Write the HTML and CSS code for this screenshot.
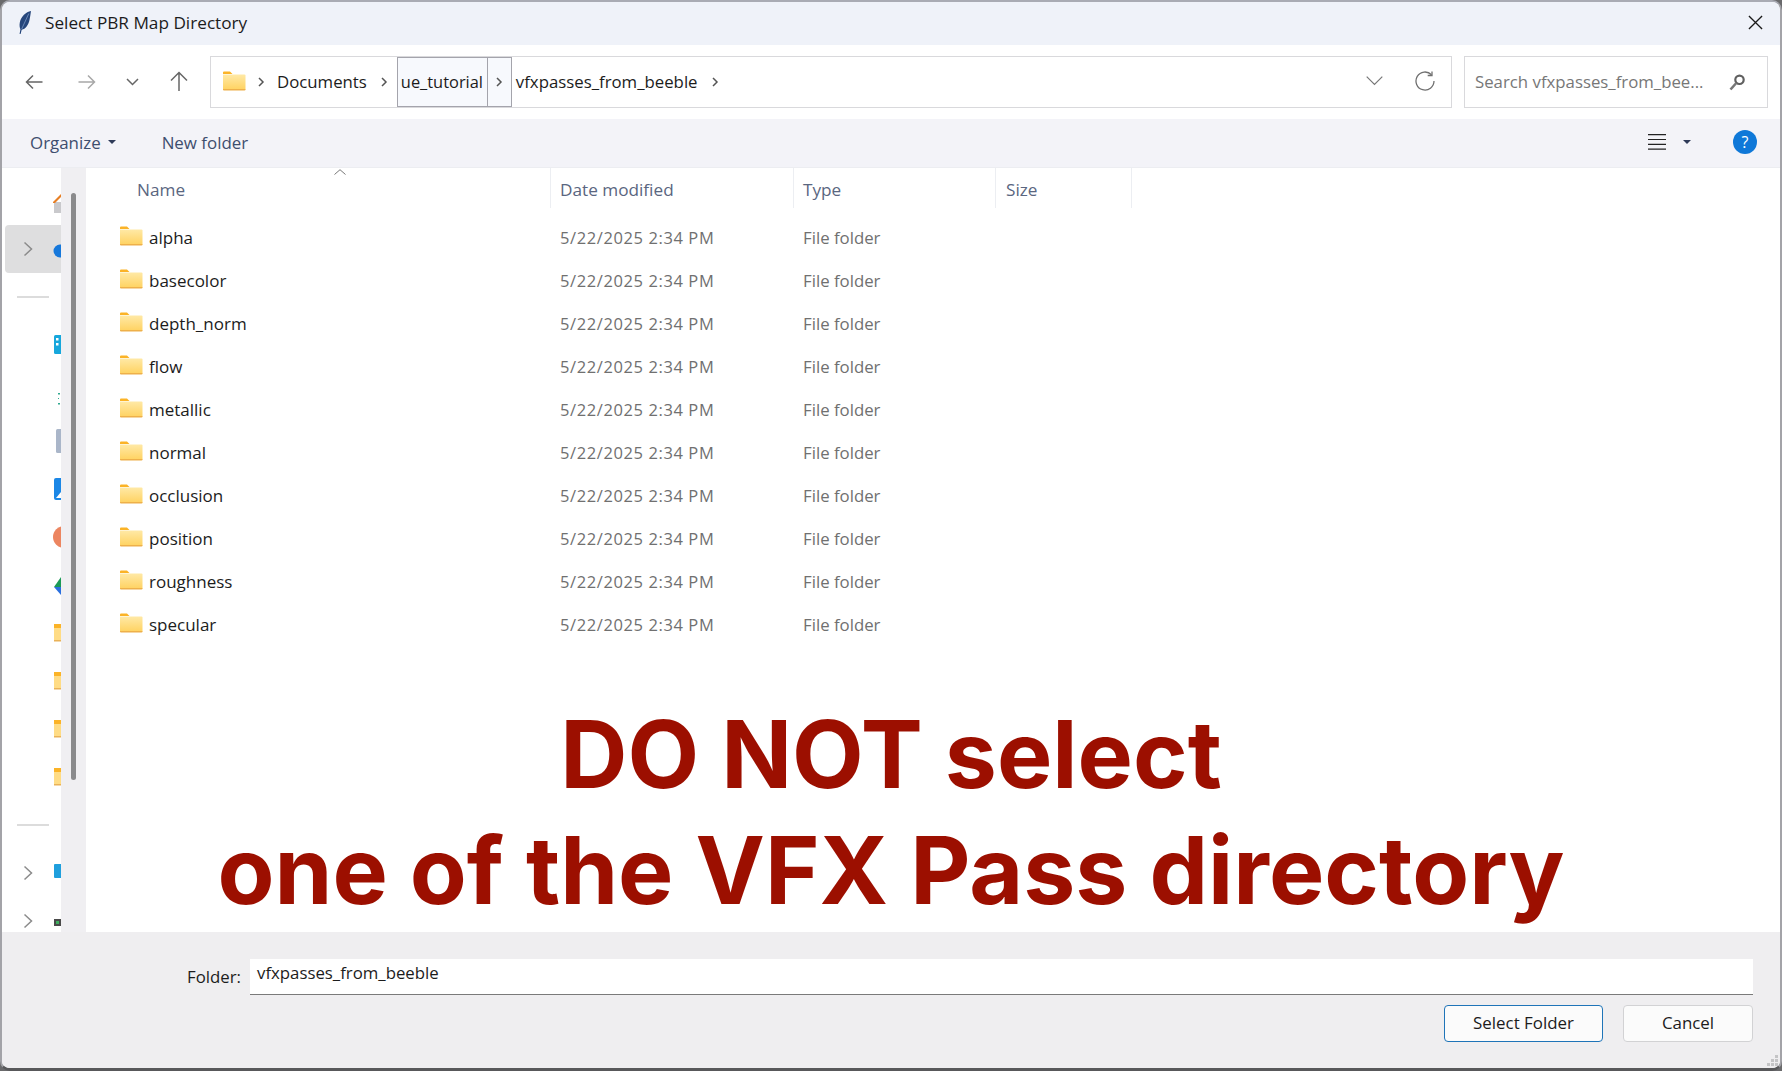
FILE: index.html
```html
<!DOCTYPE html>
<html lang="en">
<head>
<meta charset="utf-8">
<title>Select PBR Map Directory</title>
<link rel="stylesheet" href="styles.css">
</head>
<body>
<svg class="defs" width="0" height="0" aria-hidden="true">
  <defs>
    <linearGradient id="fg" x1="0" y1="0" x2="0" y2="1">
      <stop offset="0" stop-color="#ffe9a6"/><stop offset="1" stop-color="#ffd260"/>
    </linearGradient>
    <symbol id="folder" viewBox="0 0 24 20">
      <path d="M1 1.500a1 1 0 0 1 1-1h6l2.500 2.500H1z" fill="#fbb327"/>
      <path d="M1 3.500h21.500a1 1 0 0 1 1 1v13.500a1 1 0 0 1-1 1H2a1 1 0 0 1-1-1z" fill="url(#fg)"/>
      <path d="M1 18h22.500v.5a1 1 0 0 1-1 1H2a1 1 0 0 1-1-1z" fill="#eeb04a"/>
    </symbol>
    <symbol id="chev" viewBox="0 0 10 16">
      <path d="M1.500 1.500 8.500 8l-7 6.500" fill="none" stroke="#8b8b8b" stroke-width="1.500"/>
    </symbol>
    <symbol id="crumb" viewBox="0 0 8 12">
      <path d="M2 2l4 4-4 4" fill="none" stroke="#555" stroke-width="1.500"/>
    </symbol>
    <symbol id="sidefolder" viewBox="0 0 22 24">
      <rect x="1" y="3" width="21" height="5" fill="#fbb327"/>
      <rect x="1" y="7" width="21" height="12" fill="#ffdc85"/>
      <rect x="1" y="19" width="21" height="1.500" fill="#e9b258"/>
    </symbol>
  </defs>
</svg>

<div class="window">
  <header class="titlebar">
    <svg class="feather" viewBox="0 0 12 23"><path d="M12 0C7 .8 2 5.500.8 11.500c-.5 2.800-.2 5 .6 6.700L.6 23h1l1.100-4.200C6.500 18 9.500 14 10.500 9 11 6 11.700 3 12 0z" fill="#27477c"/><path d="M9.800 2.500 2.700 18" stroke="#86a3cf" stroke-width=".7" fill="none"/></svg>
    <span class="title">Select PBR Map Directory</span>
    <svg class="close" viewBox="0 0 16 16"><path d="M1 1l14 14M15 1 1 15" stroke="#1a1a1a" stroke-width="1.400" fill="none"/></svg>
  </header>

  <nav class="navbar">
    <svg class="nav-btn back" viewBox="0 0 18 16"><path d="M17.500 8H1.500M8 1.500 1.500 8 8 14.500" fill="none" stroke="#666" stroke-width="1.500"/></svg>
    <svg class="nav-btn forward" viewBox="0 0 18 16"><path d="M.5 8h16M10 1.500 16.500 8 10 14.500" fill="none" stroke="#a8a8a8" stroke-width="1.500"/></svg>
    <svg class="nav-btn recent" viewBox="0 0 13 8"><path d="M1 1l5.500 5.500L12 1" fill="none" stroke="#666" stroke-width="1.500"/></svg>
    <svg class="nav-btn up" viewBox="0 0 18 20"><path d="M9 20V1.500M1 9.500 9 1.500l8 8" fill="none" stroke="#666" stroke-width="1.500"/></svg>
    <div class="address">
      <svg class="addr-folder"><use href="#folder"/></svg>
      <svg class="crumb first"><use href="#crumb"/></svg>
      <span class="seg docs">Documents</span>
      <svg class="crumb"><use href="#crumb"/></svg>
      <div class="seg-hover"><span class="seg-name">ue_tutorial</span><span class="seg-arrow"><svg class="crumb"><use href="#crumb"/></svg></span></div>
      <span class="seg vfx">vfxpasses_from_beeble</span>
      <svg class="crumb last"><use href="#crumb"/></svg>
      <svg class="addr-drop" viewBox="0 0 17 10"><path d="M.7.7l7.800 7.800L16.300.7" fill="none" stroke="#777" stroke-width="1.200"/></svg>
      <svg class="refresh" viewBox="0 0 20 20"><path d="M16.500 3.800A9 9 0 1 0 19 10" fill="none" stroke="#707070" stroke-width="1.300"/><path d="M17 .5v4h-4.300" fill="none" stroke="#707070" stroke-width="1.300"/></svg>
    </div>
    <div class="search">
      <span class="search-text">Search vfxpasses_from_bee...</span>
      <svg class="mag" viewBox="0 0 16 17"><circle cx="10.500" cy="5.800" r="4.200" fill="none" stroke="#606060" stroke-width="2.200"/><path d="M7.300 9 1.500 15.500" stroke="#777" stroke-width="2.600" fill="none"/></svg>
    </div>
  </nav>

  <div class="toolbar">
    <span class="tool organize">Organize</span>
    <span class="caret"></span>
    <span class="tool newfolder">New folder</span>
    <span class="spacer"></span>
    <svg class="listicon" viewBox="0 0 18 16"><path d="M0 .7h18M0 5.500h18M0 10.300h18M0 15.200h18" stroke="#222" stroke-width="1.200" fill="none"/></svg>
    <span class="caret view"></span>
    <span class="help">?</span>
  </div>

  <div class="content">
    <aside class="sidebar">
      <div class="side-row">
        <span class="slot"></span>
        <svg class="side-icon" viewBox="0 0 22 24"><path d="M1 13h21v11H1z" fill="#c9c9cc"/><path d="M0 13 8 5v3l-6 6H0z" fill="#e77f24"/></svg>
      </div>
      <div class="side-row selected">
        <span class="slot"><svg class="side-chev"><use href="#chev"/></svg></span>
        <svg class="side-icon" viewBox="0 0 22 24"><circle cx="7" cy="14" r="6.500" fill="#1678db"/></svg>
      </div>
      <div class="side-sep"></div>
      <div class="side-row">
        <span class="slot"></span>
        <svg class="side-icon" viewBox="0 0 22 24"><rect x="1" y="2" width="21" height="19" rx="1.500" fill="#17a7dc"/><rect x="3" y="5" width="2.500" height="2.500" fill="#fff"/><rect x="3" y="10" width="2.500" height="2.500" fill="#fff"/></svg>
      </div>
      <div class="side-row">
        <span class="slot"></span>
        <svg class="side-icon" viewBox="0 0 22 24"><rect x="5" y="12" width="2" height="1.500" fill="#31a98f"/><rect x="5" y="17" width="1" height="1" fill="#31a98f"/><rect x="5" y="22" width="2" height="1.500" fill="#31a98f"/></svg>
      </div>
      <div class="side-row">
        <span class="slot"></span>
        <svg class="side-icon" viewBox="0 0 22 24"><rect x="3" y="0" width="19" height="24" rx="1.500" fill="#aab6c9"/></svg>
      </div>
      <div class="side-row">
        <span class="slot"></span>
        <svg class="side-icon" viewBox="0 0 22 24"><rect x="1" y="1" width="21" height="22" rx="2" fill="#1b87e6"/><path d="M3 21l5-6v6z" fill="#fff"/></svg>
      </div>
      <div class="side-row">
        <span class="slot"></span>
        <svg class="side-icon" viewBox="0 0 22 24"><circle cx="11" cy="12" r="11" fill="#ec8560"/></svg>
      </div>
      <div class="side-row">
        <span class="slot"></span>
        <svg class="side-icon" viewBox="0 0 22 24"><path d="M1 14 8 4v10z" fill="#1b9a56"/><path d="M1 14h7v8z" fill="#2a6fdf"/></svg>
      </div>
      <div class="side-row"><span class="slot"></span><svg class="side-icon"><use href="#sidefolder"/></svg></div>
      <div class="side-row"><span class="slot"></span><svg class="side-icon"><use href="#sidefolder"/></svg></div>
      <div class="side-row"><span class="slot"></span><svg class="side-icon"><use href="#sidefolder"/></svg></div>
      <div class="side-row"><span class="slot"></span><svg class="side-icon"><use href="#sidefolder"/></svg></div>
      <div class="side-sep"></div>
      <div class="side-row">
        <span class="slot"><svg class="side-chev"><use href="#chev"/></svg></span>
        <svg class="side-icon" viewBox="0 0 22 24"><rect x="1" y="3" width="21" height="14" rx="1" fill="#1f9fdd"/></svg>
      </div>
      <div class="side-row">
        <span class="slot"><svg class="side-chev"><use href="#chev"/></svg></span>
        <svg class="side-icon" viewBox="0 0 22 24"><rect x="1" y="10" width="21" height="7" fill="#4a4a4a"/><rect x="3" y="12" width="3" height="3" fill="#3fae5e"/></svg>
      </div>
    </aside>
    <div class="gutter"><div class="thumb"></div></div>
    <main class="files">
      <div class="file-head">
        <div class="hcell name-head">Name<svg class="sort" viewBox="0 0 12 6"><path d="M.5 5.500 6 .7l5.500 4.800" fill="none" stroke="#777" stroke-width="1"/></svg></div>
        <div class="hcell">Date modified</div>
        <div class="hcell">Type</div>
        <div class="hcell size-head">Size</div>
      </div>
      <div class="file-row"><div class="fname"><svg class="ficon"><use href="#folder"/></svg>alpha</div><div class="fmeta fdate">5/22/2025 2:34 PM</div><div class="fmeta">File folder</div></div>
      <div class="file-row"><div class="fname"><svg class="ficon"><use href="#folder"/></svg>basecolor</div><div class="fmeta fdate">5/22/2025 2:34 PM</div><div class="fmeta">File folder</div></div>
      <div class="file-row"><div class="fname"><svg class="ficon"><use href="#folder"/></svg>depth_norm</div><div class="fmeta fdate">5/22/2025 2:34 PM</div><div class="fmeta">File folder</div></div>
      <div class="file-row"><div class="fname"><svg class="ficon"><use href="#folder"/></svg>flow</div><div class="fmeta fdate">5/22/2025 2:34 PM</div><div class="fmeta">File folder</div></div>
      <div class="file-row"><div class="fname"><svg class="ficon"><use href="#folder"/></svg>metallic</div><div class="fmeta fdate">5/22/2025 2:34 PM</div><div class="fmeta">File folder</div></div>
      <div class="file-row"><div class="fname"><svg class="ficon"><use href="#folder"/></svg>normal</div><div class="fmeta fdate">5/22/2025 2:34 PM</div><div class="fmeta">File folder</div></div>
      <div class="file-row"><div class="fname"><svg class="ficon"><use href="#folder"/></svg>occlusion</div><div class="fmeta fdate">5/22/2025 2:34 PM</div><div class="fmeta">File folder</div></div>
      <div class="file-row"><div class="fname"><svg class="ficon"><use href="#folder"/></svg>position</div><div class="fmeta fdate">5/22/2025 2:34 PM</div><div class="fmeta">File folder</div></div>
      <div class="file-row"><div class="fname"><svg class="ficon"><use href="#folder"/></svg>roughness</div><div class="fmeta fdate">5/22/2025 2:34 PM</div><div class="fmeta">File folder</div></div>
      <div class="file-row"><div class="fname"><svg class="ficon"><use href="#folder"/></svg>specular</div><div class="fmeta fdate">5/22/2025 2:34 PM</div><div class="fmeta">File folder</div></div>
    </main>
  </div>

  <footer class="footer">
    <div class="folder-row">
      <span class="folder-label">Folder:</span>
      <div class="folder-input">vfxpasses_from_beeble</div>
    </div>
    <div class="buttons">
      <button class="btn primary">Select Folder</button>
      <button class="btn">Cancel</button>
    </div>
    <svg class="grip" viewBox="0 0 12 12"><path d="M8 0h3v3H8zM4 4h3v3H4zM8 4h3v3H8zM0 8h3v3H0zM4 8h3v3H4zM8 8h3v3H8z" fill="#c4c4c6"/></svg>
  </footer>

  <div class="warning">DO NOT select<br>one of the VFX Pass directory</div>
</div>
</body>
</html>
```

FILE: styles.css
```css
* { box-sizing: border-box; }
html, body { margin: 0; padding: 0; height: 100%; }
body {
  width: 1782px;
  height: 1071px;
  overflow: hidden;
  background: #6a6a6c;
  font-family: "Open Sans", "Noto Sans", "Liberation Sans", sans-serif;
  color: #1c1c1c;
}
.defs { position: absolute; }
.window {
  position: relative;
  width: 1782px;
  height: 1071px;
  display: flex;
  flex-direction: column;
  background: #fff;
  border-top: 2px solid #a9abb4;
  border-left: 2px solid #a3a3a8;
  border-right: 2px solid #a3a3a8;
  border-bottom: 3px solid #58585a;
  border-radius: 10px;
  overflow: hidden;
}

/* title bar */
.titlebar {
  flex: none;
  height: 43px;
  display: flex;
  align-items: center;
  padding: 0 17px 2px;
  background: #eff2f9;
}
.feather { width: 12px; height: 23px; flex: none; }
.title { margin-left: 14px; font-size: 17.200px; }
.close { width: 15px; height: 15px; margin-left: auto; }

/* nav bar */
.navbar {
  flex: none;
  height: 74px;
  display: flex;
  align-items: center;
  background: #fff;
}
.nav-btn { flex: none; }
.back { width: 18px; height: 16px; margin-left: 23px; }
.forward { width: 18px; height: 16px; margin-left: 35px; }
.recent { width: 13px; height: 8px; margin-left: 30px; }
.up { width: 18px; height: 20px; margin-left: 31px; margin-top: -2px; }
.address {
  width: 1242px;
  height: 52px;
  margin-left: 22px;
  display: flex;
  align-items: center;
  border: 1px solid #d9d9dc;
}
.addr-folder { width: 24px; height: 20px; margin: -2px 0 0 11px; flex: none; }
.crumb { width: 8px; height: 12px; flex: none; }
.seg { font-size: 16.800px; white-space: nowrap; padding-bottom: 2px; }
.docs { margin-left: 12px; }
.address > .crumb { margin-left: 13px; margin-top: -1px; }
.address > .crumb.last { margin-left: 13px; }
.address > .crumb.first { margin-left: 11px; }
.seg-hover {
  display: flex;
  height: 50px;
  margin-left: 9px;
  border: 1px solid #a4a4ac;
  background: #f7f9fd;
}
.seg-name {
  width: 89px;
  padding: 0 0 2px 3px;
  display: flex;
  align-items: center;
  font-size: 16.400px;
  white-space: nowrap;
}
.seg-arrow {
  width: 24px;
  display: flex;
  align-items: center;
  justify-content: center;
  border-left: 1px solid #a4a4ac;
}
.vfx { margin-left: 4px; }
.addr-drop { width: 17px; height: 10px; margin-left: auto; margin-top: -3px; flex: none; }
.refresh { width: 20px; height: 20px; margin: -3px 16px 0 32px; flex: none; }
.search {
  width: 304px;
  height: 52px;
  margin-left: 12px;
  display: flex;
  align-items: center;
  padding: 0 22px 0 10px;
  border: 1px solid #d9d9dc;
}
.search-text { font-size: 16.800px; color: #777; white-space: nowrap; padding-bottom: 2px; }
.mag { width: 16px; height: 17px; margin-left: auto; }

/* toolbar */
.toolbar {
  flex: none;
  height: 49px;
  display: flex;
  align-items: center;
  padding: 0 23px 2px 28px;
  background: #f3f3f8;
  border-bottom: 1px solid #ecedf1;
}
.tool { font-size: 16.900px; color: #3e4e6e; }
.caret {
  width: 0;
  height: 0;
  margin-left: 7px;
  border-left: 4px solid transparent;
  border-right: 4px solid transparent;
  border-top: 4px solid #2e3a58;
}
.newfolder { margin-left: 46px; }
.spacer { flex: 1; }
.listicon { width: 18px; height: 16px; }
.caret.view { margin-left: 17px; margin-right: 1px; }
.help {
  width: 24px;
  height: 24px;
  margin-left: 41px;
  border-radius: 50%;
  background: #0f78d8;
  color: #fff;
  font-size: 16px;
  line-height: 24px;
  text-align: center;
}

/* content */
.content { flex: 1; min-height: 0; display: flex; background: #fff; }
.sidebar {
  flex: none;
  width: 59px;
  padding-top: 9px;
  overflow: hidden;
  background: #fff;
}
.side-row {
  height: 48px;
  margin-left: 3px;
  display: flex;
  align-items: center;
  width: 70px;
}
.side-row.selected { background: #dededf; border-radius: 4px 0 0 4px; }
.slot { width: 48px; flex: none; padding-left: 18px; display: flex; align-items: center; }
.side-chev { width: 10px; height: 16px; }
.side-icon { width: 22px; height: 24px; flex: none; }
.side-sep { height: 48px; display: flex; align-items: center; margin-left: 15px; width: 32px; }
.side-sep::before { content: ""; width: 100%; height: 2px; background: #dcdcdc; }
.gutter { flex: none; width: 25px; background: #f0eff2; padding: 25px 0 0 10px; }
.thumb { width: 5px; height: 587px; border-radius: 3px; background: #8a8a8c; }

.files { flex: 1; min-width: 0; }
.file-head {
  display: grid;
  grid-template-columns: 465px 243px 202px 136px;
  height: 40px;
  margin-bottom: 8px;
  width: 1046px;
}
.hcell {
  position: relative;
  display: flex;
  align-items: center;
  padding: 2px 0 0 9px;
  font-size: 17.200px;
  color: #5a6680;
  border-right: 1px solid #eceef2;
}
.name-head { padding-left: 51px; }
.size-head { padding-left: 10px; }
.sort { position: absolute; left: 248px; top: 1px; width: 12px; height: 6px; }
.file-row {
  display: grid;
  grid-template-columns: 465px 243px 202px;
  height: 43px;
  align-items: center;
}
.fname {
  display: flex;
  align-items: center;
  padding-left: 33px;
  font-size: 17px;
}
.ficon { width: 24px; height: 20px; margin-right: 6px; margin-top: -3px; flex: none; }
.fmeta { padding-left: 9px; font-size: 16.800px; color: #707070; }
.fdate { font-size: 16.500px; letter-spacing: .6px; }

/* footer */
.footer {
  position: relative;
  flex: none;
  height: 136px;
  padding: 27px 27px 0 0;
  background: #efeef0;
}
.folder-row { display: flex; align-items: center; height: 36px; }
.folder-label { margin-left: 185px; width: 63px; font-size: 16.800px; padding-bottom: 1px; }
.folder-input {
  flex: 1;
  height: 36px;
  padding: 2px 0 0 7px;
  background: #fff;
  border-bottom: 1px solid #7a7a7a;
  font-size: 16.800px;
}
.buttons { display: flex; justify-content: flex-end; gap: 20px; margin-top: 10px; }
.btn {
  width: 130px;
  height: 37px;
  padding: 0 0 2px;
  font-family: inherit;
  font-size: 16.900px;
  color: #1c1c1c;
  background: #fbfbfb;
  border: 1px solid #d2d2d4;
  border-radius: 4px;
}
.btn.primary { width: 159px; border: 1.500px solid #1f74b8; }
.grip { position: absolute; right: 1px; bottom: 1px; width: 12px; height: 12px; }

/* overlaid warning */
.warning {
  position: absolute;
  left: 0;
  right: 0;
  top: 694px;
  text-align: center;
  font-family: Inter, "Liberation Sans", sans-serif;
  font-weight: 700;
  font-size: 93px;
  line-height: 116px;
  color: #9c0f00;
}
```
